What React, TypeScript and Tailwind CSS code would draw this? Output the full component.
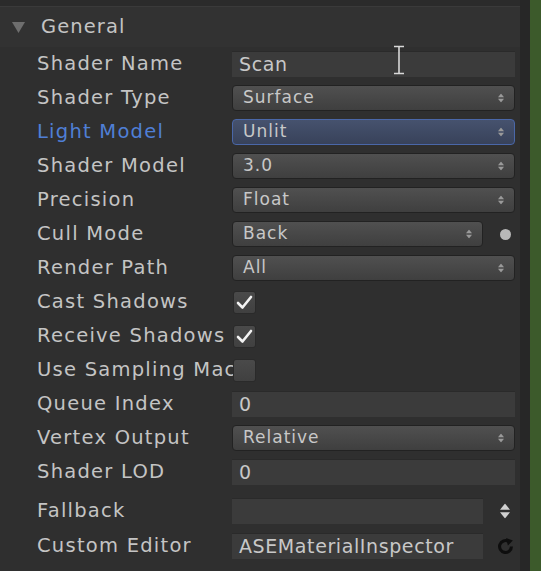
import React from "react";

const font = { fontFamily: '"DejaVu Sans", "Liberation Sans", sans-serif' };

// small up/down arrows used inside popup fields
function UpDown({ className = "" }: { className?: string }) {
  return (
    <svg className={className} width="8" height="12" viewBox="0 0 8 12" fill="currentColor">
      <path d="M4 0 L8 5 H0 Z" />
      <path d="M4 12 L8 7 H0 Z" />
    </svg>
  );
}

function Label({ children, blue = false }: { children: React.ReactNode; blue?: boolean }) {
  return (
    <div
      className={`w-[195px] shrink-0 whitespace-nowrap text-[19.5px] tracking-[1.25px] ${
        blue ? "text-[#4f7fd6]" : "text-[#c4c4c4]"
      }`}
    >
      {children}
    </div>
  );
}

function Popup({ value, active = false, narrow = false }: { value: string; active?: boolean; narrow?: boolean }) {
  return (
    <div
      className={`h-[26px] ${narrow ? "w-[251px]" : "w-[283px]"} flex shrink-0 items-center justify-between rounded-[4px] border pl-[10px] pr-[9px] ${
        active
          ? "border-[#4a67a8] bg-gradient-to-b from-[#46526e] to-[#38425a]"
          : "border-[#222] bg-gradient-to-b from-[#505050] to-[#3f3f3f]"
      }`}
    >
      <span className="text-[17px] tracking-[1px] text-[#c8c8c8]">{value}</span>
      <UpDown className="text-[#9a9a9a] scale-75" />
    </div>
  );
}

function Field({ value = "", narrow = false }: { value?: string; narrow?: boolean }) {
  return (
    <div
      className={`h-[26px] ${narrow ? "w-[251px]" : "w-[283px]"} flex shrink-0 items-center border-t border-[#2a2a2a] bg-[#3b3b3b] pl-[7px] text-[19px] tracking-[0.6px] text-[#c8c8c8]`}
    >
      {value}
    </div>
  );
}

function Check({ on }: { on: boolean }) {
  return (
    <div className="ml-[1px] flex h-[23px] w-[23px] items-center justify-center rounded-[3px] border border-[#2a2a2a] bg-gradient-to-b from-[#4a4a4a] to-[#404040]">
      {on && (
        <svg width="17" height="15" viewBox="0 0 17 15" fill="none">
          <path d="M2 8 L6.5 12.5 L15 2" stroke="#f2f2f2" strokeWidth="2.6" strokeLinecap="round" strokeLinejoin="round" />
        </svg>
      )}
    </div>
  );
}

function Row({ children, h = "h-[34px]" }: { children: React.ReactNode; h?: string }) {
  return <div className={`${h} flex items-center pl-[37px]`}>{children}</div>;
}

function Side({ children }: { children: React.ReactNode }) {
  return <div className="flex w-[37px] shrink-0 justify-center pl-[7px]">{children}</div>;
}

export default function App() {
  return (
    <div className="flex h-[571px] w-[541px] overflow-hidden bg-[#2f2f2f]" style={font}>
      <div className="relative flex w-[520px] flex-col">
        {/* top edge */}
        <div className="h-[6px] bg-[#2b2b2b]" />
        <div className="h-px bg-[#3a3a3a]" />

        {/* foldout header */}
        <div className="flex h-[40px] items-center bg-[#323232] pl-[12px]">
          <svg width="13" height="11" viewBox="0 0 13 11" className="mr-[16px]">
            <path d="M0 0 H13 L6.5 11 Z" fill="#6e6e6e" />
          </svg>
          <span className="text-[19.5px] tracking-[1.1px] text-[#c4c4c4]">General</span>
        </div>

        <Row>
          <Label>Shader Name</Label>
          <Field value="Scan" />
        </Row>
        <Row>
          <Label>Shader Type</Label>
          <Popup value="Surface" />
        </Row>
        <Row>
          <Label blue>Light Model</Label>
          <Popup value="Unlit" active />
        </Row>
        <Row>
          <Label>Shader Model</Label>
          <Popup value="3.0" />
        </Row>
        <Row>
          <Label>Precision</Label>
          <Popup value="Float" />
        </Row>
        <Row>
          <Label>Cull Mode</Label>
          <Popup value="Back" narrow />
          <Side>
            <div className="h-[11px] w-[11px] rounded-full bg-[#b8b8b8]" />
          </Side>
        </Row>
        <Row>
          <Label>Render Path</Label>
          <Popup value="All" />
        </Row>
        <Row>
          <Label>Cast Shadows</Label>
          <Check on />
        </Row>
        <Row>
          <Label>Receive Shadows</Label>
          <Check on />
        </Row>
        <Row>
          <Label>Use Sampling Mac</Label>
          <Check on={false} />
        </Row>
        <Row>
          <Label>Queue Index</Label>
          <Field value="0" />
        </Row>
        <Row>
          <Label>Vertex Output</Label>
          <Popup value="Relative" />
        </Row>
        <Row>
          <Label>Shader LOD</Label>
          <Field value="0" />
        </Row>
        <Row h="h-[40px] pt-[4px]">
          <Label>Fallback</Label>
          <Field narrow />
          <Side>
            <UpDown className="text-[#d0d0d0] scale-125" />
          </Side>
        </Row>
        <Row h="h-[34px]">
          <Label>Custom Editor</Label>
          <Field value="ASEMaterialInspector" narrow />
          <Side>
            <svg width="19" height="19" viewBox="0 0 16 16" fill="none">
              <path d="M13 8 A5 5 0 1 1 10.5 3.7" stroke="#0e0e0e" strokeWidth="2.6" />
              <path d="M8.5 0.8 L14.2 3 L10 7.2 Z" fill="#0e0e0e" />
            </svg>
          </Side>
        </Row>

        {/* mouse text cursor over the name field */}
        <svg className="absolute left-[392px] top-[45px]" width="14" height="30" viewBox="0 0 14 30" fill="none">
          <path d="M2 1.5 H12 M2 28.5 H12 M7 1.5 V28.5" stroke="#d8d8d8" strokeWidth="1.6" />
        </svg>
      </div>
      <div className="w-[10px] bg-[#272727]" />
      <div className="w-[11px] bg-[#3c5a2b]" />
    </div>
  );
}
